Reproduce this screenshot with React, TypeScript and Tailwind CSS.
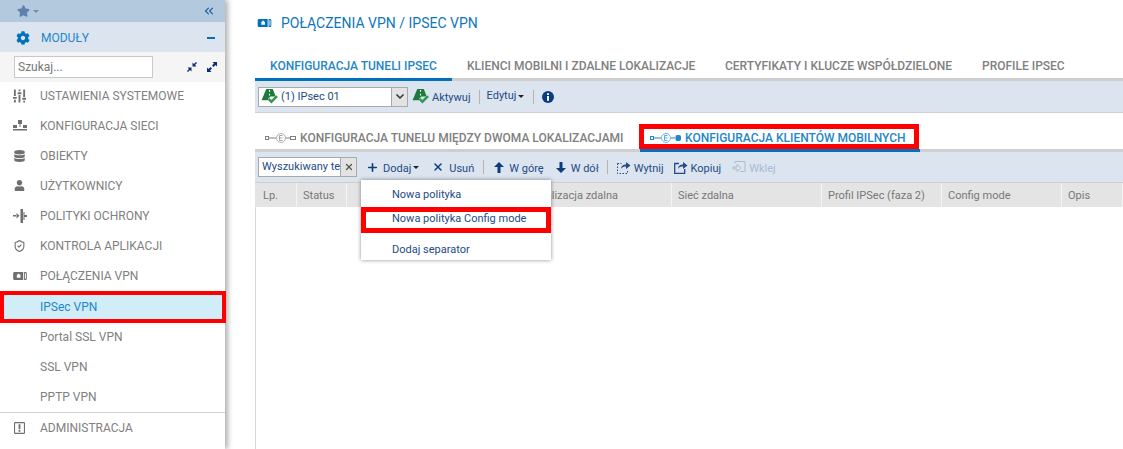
import { Plus, X } from "lucide-react"
import { FaCog, FaDatabase, FaStar, FaUser } from "react-icons/fa"
import { ChevronsLeft, ShieldCheck } from "lucide-react"

type IconProps = { className?: string }

function SlidersIcon({ className }: IconProps) {
  return (
    <svg viewBox="0 0 14 14" className={className} fill="currentColor">
      <path d="M1 0h2v7H1zM1 11h2v3H1zM0 8h4v2H0zM6 0h2v2H6zM6 6h2v8H6zM5 3h4v2H5zM11 0h2v8h-2zM11 12h2v2h-2zM10 9h4v2h-4z" />
    </svg>
  )
}

function NetworkIcon({ className }: IconProps) {
  return (
    <svg viewBox="0 0 14 12" className={className} fill="currentColor">
      <path d="M5 0h4v4H5zM6.500 4h1v3h-1zM0 5h4v3H0zM10 5h4v3h-4zM0 9h14v1.500H0z" />
    </svg>
  )
}

function PolicyIcon({ className }: IconProps) {
  return (
    <svg viewBox="0 0 14 14" className={className} fill="currentColor">
      <path d="M0 6h3v1.500H0zM3.500 4 6.500 6.800 3.500 9.500zM7.500 0h2.500v14H7.500zM10.500 3h1v3h2.500v2h-2.500v3h-1z" />
    </svg>
  )
}

function VpnIcon({ className }: IconProps) {
  return (
    <svg viewBox="0 0 15 11" className={className} fill="currentColor">
      <path fillRule="evenodd" d="M1.500 1H11v9H1.500C.7 10 0 9.300 0 8.500v-6C0 1.700.7 1 1.500 1zM4 4v3.500h4V4H7V3H5v1z" />
      <path fillRule="evenodd" d="M12 1h1.500c.8 0 1.500.7 1.500 1.500v6c0 .8-.7 1.500-1.500 1.500H12zm1 1.500v6h1v-6z" />
    </svg>
  )
}

function AlertIcon({ className }: IconProps) {
  return (
    <svg viewBox="0 0 12 13" className={className} fill="currentColor">
      <path fillRule="evenodd" d="M1 0h10a1 1 0 0 1 1 1v11a1 1 0 0 1-1 1H1a1 1 0 0 1-1-1V1a1 1 0 0 1 1-1zm.2 1.200v10.600h9.600V1.200zM5 2.500h2v5H5zM5 8.500h2v2H5z" />
    </svg>
  )
}

function TunnelIcon({ className, lock }: IconProps & { lock?: boolean }) {
  return (
    <svg viewBox="0 0 32 10" className={className} fill="none" stroke="currentColor">
      <path d="M3 5h8M21 5h4" />
      <rect x="0.500" y="3.500" width="3" height="3" />
      <circle cx="16" cy="5" r="4.500" strokeOpacity="0.6" />
      <path d="M14.500 2.500v5M14.500 2.500h3M14.500 5h3M14.500 7.500h3" strokeWidth="0.7" />
      {lock ? (
        <rect x="26" y="2.500" width="4.500" height="5" rx="1" fill="currentColor" />
      ) : (
        <rect x="25.500" y="3.500" width="5" height="3" />
      )}
    </svg>
  )
}

function ActivateIcon({ className }: IconProps) {
  return (
    <svg viewBox="0 0 18 16" className={className}>
      <path d="M5 0h7l3 8H9.500L7 10.500V12H0z" fill="#1e7a3c" />
      <path d="M8.500 1v2M8.500 5v2" stroke="#fff" strokeWidth="1.200" />
      <path d="M7.500 10.500l3 3 6-6" fill="none" stroke="#2d9a4e" strokeWidth="2.600" />
    </svg>
  )
}

function CompressIcon({ className }: IconProps) {
  return (
    <svg viewBox="0 0 10 10" className={className} fill="#0a2f6b">
      <path d="M5.500.5v4h4L8 3l2-2L9 0 7 2zM.5 5.500h4v4L3 8l-2 2-1-1 2-2z" />
    </svg>
  )
}

function ExpandIcon({ className }: IconProps) {
  return (
    <svg viewBox="0 0 10 10" className={className} fill="#0a2f6b">
      <path d="M5.500 0H10v4.500L8.500 3 6.500 5 5 3.500 7 1.500zM0 5.500V10h4.500L3 8.500 5 6.500 3.500 5l-2 2z" />
    </svg>
  )
}

function ArrowIcon({ className, down }: IconProps & { down?: boolean }) {
  return (
    <svg viewBox="0 0 10 11" className={className} fill="#0a3d80">
      <path d={down ? "M3.500 0h3v6H10l-5 5-5-5h3.500z" : "M5 0l5 5H6.500v6h-3V5H0z"} />
    </svg>
  )
}

function InfoIcon({ className }: IconProps) {
  return (
    <svg viewBox="0 0 12 12" className={className}>
      <circle cx="6" cy="6" r="6" fill="#0a3d80" />
      <path d="M5 2.200h2v1.800H5zM5 5h2v4.800H5z" fill="#fff" />
    </svg>
  )
}

function CutIcon({ className }: IconProps) {
  return (
    <svg viewBox="0 0 14 13" className={className} fill="none" stroke="currentColor">
      <path d="M.5 2.500v10h10v-4" strokeDasharray="1.500 1.500" />
      <path d="M.5 2.500h4" strokeDasharray="1.500 1.500" />
      <path d="M4 8c0-3 2-4.500 5-4.500V1l4.500 3.500L9 8V5.500C7 5.500 5 6 4 8z" fill="currentColor" stroke="none" />
    </svg>
  )
}

function CopyIcon({ className }: IconProps) {
  return (
    <svg viewBox="0 0 14 13" className={className} fill="none" stroke="currentColor" strokeWidth="1.300">
      <path d="M5 2.500H.7v9.800h10V8" />
      <path d="M4 8c0-3 2-4.500 5-4.500V1l4.500 3.500L9 8V5.500C7 5.500 5 6 4 8z" fill="currentColor" stroke="none" />
    </svg>
  )
}

function PasteIcon({ className }: IconProps) {
  return (
    <svg viewBox="0 0 14 13" className={className} fill="none" stroke="currentColor">
      <path d="M3 2.500V.5h10v10H8" />
      <path d="M1 6h4V3.500L9 7l-4 3.500V8H1z" />
    </svg>
  )
}

const menuItems = [
  { label: "USTAWIENIA SYSTEMOWE", icon: <SlidersIcon className="w-[13px] h-[14px]" /> },
  { label: "KONFIGURACJA SIECI", icon: <NetworkIcon className="w-[14px] h-[12px]" /> },
  { label: "OBIEKTY", icon: <FaDatabase className="w-[11px] h-[12px]" /> },
  { label: "UŻYTKOWNICY", icon: <FaUser className="w-[11px] h-[11px]" /> },
  { label: "POLITYKI OCHRONY", icon: <PolicyIcon className="w-[14px] h-[14px]" /> },
  { label: "KONTROLA APLIKACJI", icon: <ShieldCheck className="w-[13px] h-[14px]" /> },
  { label: "POŁĄCZENIA VPN", icon: <VpnIcon className="w-[14px] h-[10px]" /> },
]

const subItems = ["Portal SSL VPN", "SSL VPN", "PPTP VPN"]

const topTabs = [
  { label: "KONFIGURACJA TUNELI IPSEC", width: "w-[197px]", active: true },
  { label: "KLIENCI MOBILNI I ZDALNE LOKALIZACJE", width: "w-[258px]" },
  { label: "CERTYFIKATY I KLUCZE WSPÓŁDZIELONE", width: "w-[257px]" },
  { label: "PROFILE IPSEC", width: "w-[110px]" },
]

const columns = [
  { label: "Lp.", width: "w-[42px] pl-[8px]" },
  { label: "Status", width: "w-[50px] pl-[6px]" },
  { label: "", width: "w-[175px] pl-[6px]" },
  { label: "Lokalizacja zdalna", width: "w-[150px] pl-[6px]" },
  { label: "Sieć zdalna", width: "w-[150px] pl-[6px]" },
  { label: "Profil IPSec (faza 2)", width: "w-[120px] pl-[6px]" },
  { label: "Config mode", width: "w-[120px] pl-[6px]" },
  { label: "Opis", width: "flex-1 pl-[6px]" },
]

function Sidebar() {
  return (
    <aside className="relative z-10 w-[225px] shrink-0 bg-white shadow-[3px_0_5px_rgba(0,0,0,0.3)]">
      <div className="flex h-[22px] items-center justify-between bg-[#b3c9de] pl-[17px] pr-[9px]">
        <div className="flex items-center gap-[3px] text-[#5e81ae]">
          <FaStar className="h-[12px] w-[13px]" />
          <span className="h-0 w-0 border-x-[3px] border-t-[3px] border-x-transparent border-t-[#6d8db5]" />
        </div>
        <ChevronsLeft className="h-[14px] w-[14px] text-[#1d5fa3]" />
      </div>
      <div className="flex h-[30px] items-center bg-[#dbe4ef] pl-[16px] pr-[10px] pt-[1px]">
        <FaCog className="h-[14px] w-[14px] text-[#0072bc]" />
        <span className="ml-[11px] text-[12px] text-[#1f86c8]">MODUŁY</span>
        <span className="ml-auto h-[2px] w-[8px] bg-[#0072bc]" />
      </div>
      <div className="flex h-[30px] items-center bg-[#f5f5f5] pl-[14px] pr-[8px]">
        <input
          readOnly
          placeholder="Szukaj..."
          className="h-[22px] w-[139px] border border-[#c9c9c9] bg-white px-[3px] text-[12px] placeholder:text-[#777] outline-none"
        />
        <CompressIcon className="ml-[34px] h-[10px] w-[10px]" />
        <ExpandIcon className="ml-[10px] h-[10px] w-[10px]" />
      </div>
      {menuItems.map((item) => (
        <div key={item.label} className="flex h-[30px] pt-[5px] text-[#808080]">
          <div className="flex h-[17px] w-[40px] shrink-0 items-center justify-center pl-[6px] pr-[7px] text-[#6f6f6f]">{item.icon}</div>
          <span className="mt-[1px] text-[12px] leading-[17px]">{item.label}</span>
        </div>
      ))}
      <div className="relative flex h-[30px] items-center bg-[#d1edf8] pl-[40px]">
        <span className="text-[12px] text-[#1f86c8]">IPSec VPN</span>
        <div className="absolute inset-y-[-1px] left-0 right-[-1px] border-[4px] border-[#ff0000]" />
      </div>
      {subItems.map((label) => (
        <div key={label} className="flex h-[30px] items-center pl-[40px] pb-[1px]">
          <span className="text-[12px] text-[#808080]">{label}</span>
        </div>
      ))}
      <div className="flex h-[30px] border-t border-[#d2d2d2] pt-[6px] text-[#808080]">
        <div className="flex h-[17px] w-[40px] shrink-0 items-center justify-center pr-[7px] pl-[6px] text-[#6f6f6f]">
          <AlertIcon className="h-[12px] w-[11px]" />
        </div>
        <span className="mt-[1px] text-[12px] leading-[17px]">ADMINISTRACJA</span>
      </div>
    </aside>
  )
}

function Divider({ className }: IconProps) {
  return <span className={`h-[14px] w-px bg-[#b9b4a6] ${className}`} />
}

function Toolbar() {
  return (
    <div className="flex h-[32px] items-center border-b border-[#cfcfcf] bg-[#dbe4ef] pl-[3px] text-[11px] text-[#234b85]">
      <div className="flex h-[20px] w-[150px] items-center border border-[#a9a9a9] bg-white">
        <ActivateIcon className="ml-[2px] h-[15px] w-[18px]" />
        <span className="ml-[2px] mt-[2px] text-[11px] text-[#234b85]">(1) IPsec 01</span>
        <span className="ml-auto flex h-full w-[16px] items-center justify-center border-l border-[#a9a9a9] bg-[#e3e3e3]">
          <svg viewBox="0 0 8 5" className="h-[5px] w-[8px]" fill="none" stroke="#333" strokeWidth="1.500">
            <path d="M.5.500 4 4 7.500.5" />
          </svg>
        </span>
      </div>
      <ActivateIcon className="ml-[4px] h-[15px] w-[18px]" />
      <span className="ml-[2px] mt-[3px]">Aktywuj</span>
      <Divider className="ml-[8px]" />
      <span className="ml-[7px]">Edytuj</span>
      <span className="ml-[2px] h-0 w-0 border-x-[3px] border-t-[3px] border-x-transparent border-t-[#222]" />
      <Divider className="ml-[9px]" />
      <InfoIcon className="ml-[8px] h-[12px] w-[12px]" />
    </div>
  )
}

function PolicyToolbar() {
  return (
    <div className="flex h-[31px] items-center border-b border-[#cfcfcf] bg-[#dbe4ef] pl-[3px] text-[11px] text-[#234b85]">
      <div className="flex h-[20px] w-[99px] items-center border border-[#a9a9a9] bg-white">
        <span className="w-[81px] pl-[3px] text-[11px] whitespace-nowrap overflow-hidden">Wyszukiwany te</span>
        <span className="flex h-full w-[16px] items-center justify-center border-l border-[#a9a9a9] bg-[#e3e3e3] text-[#555]">
          <X className="h-[10px] w-[10px]" strokeWidth={3} />
        </span>
      </div>
      <Plus className="ml-[9px] h-[13px] w-[13px] text-[#0a3d80]" strokeWidth={3} />
      <span className="ml-[4px] mt-[4px]">Dodaj</span>
      <span className="ml-[2px] h-0 w-0 border-x-[3px] border-t-[3px] border-x-transparent border-t-[#222]" />
      <X className="ml-[13px] h-[12px] w-[12px] text-[#0a3d80]" strokeWidth={3} />
      <span className="ml-[5px] mt-[4px]">Usuń</span>
      <Divider className="ml-[9px]" />
      <ArrowIcon className="ml-[10px] h-[11px] w-[10px]" />
      <span className="ml-[5px] mt-[4px]">W górę</span>
      <ArrowIcon down className="ml-[12px] h-[11px] w-[10px]" />
      <span className="ml-[5px] mt-[4px]">W dół</span>
      <Divider className="ml-[8px]" />
      <CutIcon className="ml-[9px] h-[13px] w-[14px] text-[#234b85]" />
      <span className="ml-[3px] mt-[4px]">Wytnij</span>
      <CopyIcon className="ml-[10px] h-[13px] w-[14px] text-[#234b85]" />
      <span className="ml-[3px] mt-[4px]">Kopiuj</span>
      <PasteIcon className="ml-[11px] h-[13px] w-[14px] text-[#a9bcd3]" />
      <span className="ml-[3px] mt-[4px] text-[#a9bcd3]">Wklej</span>
    </div>
  )
}

function AddMenu() {
  return (
    <div className="absolute left-[106px] top-[28px] z-20 h-[80px] w-[190px] bg-white text-[11px] text-[#234b85] shadow-[0_0_4px_rgba(0,0,0,0.45)]">
      <div className="flex h-[27px] items-center pl-[31px] pt-[3px]">Nowa polityka</div>
      <div className="relative flex h-[26px] items-center pb-[2px] pl-[31px]">
        Nowa polityka Config mode
        <div className="absolute inset-0 border-[5px] border-[#ff0000]" />
      </div>
      <div className="flex h-[27px] items-center pl-[31px] pt-[8px]">Dodaj separator</div>
    </div>
  )
}

export default function App() {
  return (
    <div className="flex h-[449px] w-[1123px] overflow-hidden bg-white font-['Roboto',sans-serif]">
      <Sidebar />
      <main className="ml-[30px] min-w-0 flex-1">
        <div className="flex h-[46px] items-center text-[#0f76b9]">
          <VpnIcon className="ml-[2px] h-[10px] w-[15px] text-[#0072bc]" />
          <span className="ml-[9px] text-[14px]">POŁĄCZENIA VPN / IPSEC VPN</span>
        </div>
        <div className="flex h-[35px] border-b-[3px] border-[#cfcfcf]">
          {topTabs.map((tab) => (
            <div
              key={tab.label}
              className={`${tab.width} -mb-[3px] flex h-[35px] shrink-0 items-center whitespace-nowrap border-b-[3px] pl-[15px] pt-[8px] text-[12px] font-medium ${tab.active ? "border-[#0072bc] text-[#1f86c8]" : "border-transparent text-[#808080]"}`}
            >
              {tab.label}
            </div>
          ))}
        </div>
        <Toolbar />
        <div className="flex h-[39px] border-b-[3px] border-[#cfcfcf]">
          <div className="flex w-[385px] items-center pl-[10px] pt-[14px] text-[12px] font-medium text-[#808080]">
            <TunnelIcon className="mr-[3px] h-[10px] w-[32px]" />
            KONFIGURACJA TUNELU MIĘDZY DWOMA LOKALIZACJAMI
          </div>
          <div className="relative -mb-[3px] flex h-[39px] w-[280px] items-center border-b-[3px] border-[#0072bc] pl-[10px] pt-[14px] text-[12px] font-medium text-[#1f86c8]">
            <TunnelIcon lock className="mr-[3px] h-[10px] w-[32px]" />
            KONFIGURACJA KLIENTÓW MOBILNYCH
            <div className="absolute bottom-0 left-[-1px] right-[1px] top-[11px] border-[5px] border-[#ff0000]" />
          </div>
        </div>
        <div className="relative">
          <PolicyToolbar />
          <AddMenu />
          <div className="flex h-[24px] bg-[#e4e4e4] text-[11px] text-[#777]">
            {columns.map((col, i) => (
              <div key={i} className={`${col.width} flex items-center border-r border-[#f4f4f4] pt-[3px]`}>
                {col.label}
              </div>
            ))}
          </div>
          <div className="h-[242px] border-l border-[#d8d8d8]" />
        </div>
      </main>
    </div>
  )
}
